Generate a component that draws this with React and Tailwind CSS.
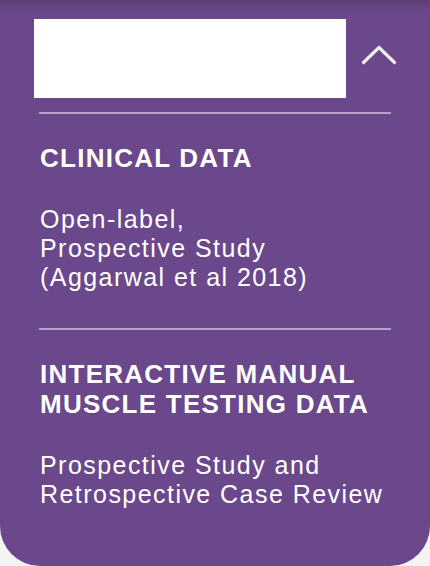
import React from 'react';

const sections = [
  {
    title: ['CLINICAL DATA'],
    body: ['Open-label,', 'Prospective Study', '(Aggarwal et al 2018)'],
  },
  {
    title: ['INTERACTIVE MANUAL', 'MUSCLE TESTING DATA'],
    body: ['Prospective Study and', 'Retrospective Case Review'],
  },
];

const ChevronUp = () => (
  <svg width="36" height="22" viewBox="0 0 36 22" fill="none">
    <path d="M2.5 18.5 L18 3.5 L33.5 18.5" stroke="#eeeeee" strokeWidth="3.2" strokeLinecap="round" strokeLinejoin="round" />
  </svg>
);

const App = () => {
  return (
    <div className="w-[430px] h-[566px] bg-[#f4f4f4] overflow-hidden" style={{ fontFamily: '"Liberation Sans", Arial, sans-serif' }}>
      <div className="h-[566px] bg-[#6b488b] rounded-b-[40px] shadow-[inset_0_12px_12px_-8px_rgba(0,0,0,0.18)] text-white">
        <div className="flex items-start pt-[19px] pl-[34px]">
          <div className="w-[312px] h-[79px] bg-white" />
          <div className="ml-[15px] mt-[25px]">
            <ChevronUp />
          </div>
        </div>

        <div className="mx-[39px] w-[352px]">
          {sections.map((s, i) => (
            <div key={i} className={i === 0 ? 'mt-[14px]' : 'mt-[36px]'}>
              <div className="h-[2px] bg-[#b6a4c7]" />
              <div className="pt-[29px] pl-[1px]">
                <h3 className="text-[26px] leading-[30px] font-bold tracking-[1.25px]">
                  {s.title.map((t) => (
                    <div key={t}>{t}</div>
                  ))}
                </h3>
                <p className="mt-[32px] text-[25px] leading-[29px] tracking-[1.45px]">
                  {s.body.map((t) => (
                    <span key={t} className="block">{t}</span>
                  ))}
                </p>
              </div>
            </div>
          ))}
        </div>
      </div>
    </div>
  );
};

export default App;
